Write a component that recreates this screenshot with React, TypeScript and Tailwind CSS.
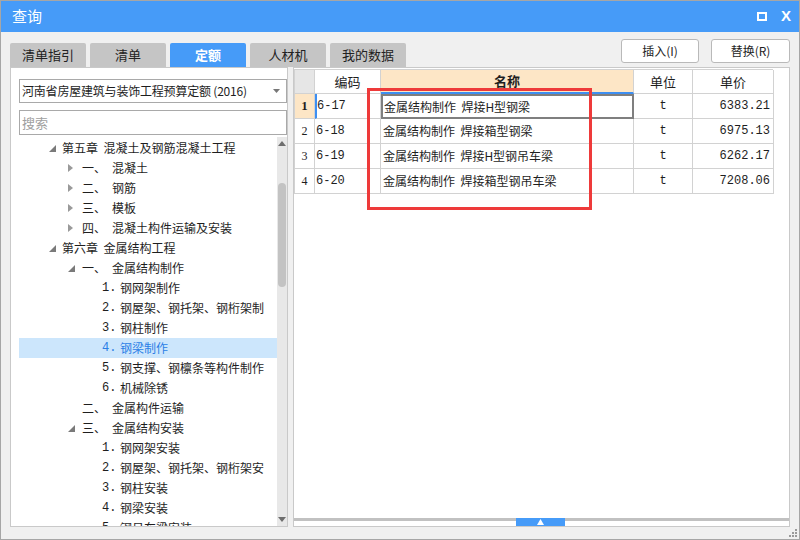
import React from "react";

const cjk = { fontFamily: '"Noto Sans CJK SC", "Noto Sans", sans-serif' };
const mono = { fontFamily: '"Liberation Mono", "Noto Sans CJK SC", monospace' };

type TreeRow = {
  level: 0 | 1 | 2;
  tri?: "open" | "closed";
  num?: string;
  text: string;
  selected?: boolean;
};

const tree: TreeRow[] = [
  { level: 0, tri: "open", text: "第五章  混凝土及钢筋混凝土工程" },
  { level: 1, tri: "closed", num: "一、", text: "混凝土" },
  { level: 1, tri: "closed", num: "二、", text: "钢筋" },
  { level: 1, tri: "closed", num: "三、", text: "模板" },
  { level: 1, tri: "closed", num: "四、", text: "混凝土构件运输及安装" },
  { level: 0, tri: "open", text: "第六章  金属结构工程" },
  { level: 1, tri: "open", num: "一、", text: "金属结构制作" },
  { level: 2, num: "1.", text: "钢网架制作" },
  { level: 2, num: "2.", text: "钢屋架、钢托架、钢桁架制" },
  { level: 2, num: "3.", text: "钢柱制作" },
  { level: 2, num: "4.", text: "钢梁制作", selected: true },
  { level: 2, num: "5.", text: "钢支撑、钢檩条等构件制作" },
  { level: 2, num: "6.", text: "机械除锈" },
  { level: 1, num: "二、", text: "金属构件运输" },
  { level: 1, tri: "open", num: "三、", text: "金属结构安装" },
  { level: 2, num: "1.", text: "钢网架安装" },
  { level: 2, num: "2.", text: "钢屋架、钢托架、钢桁架安" },
  { level: 2, num: "3.", text: "钢柱安装" },
  { level: 2, num: "4.", text: "钢梁安装" },
  { level: 2, num: "5.", text: "钢吊车梁安装" },
];

const rows = [
  { code: "6-17", name: "金属结构制作  焊接H型钢梁", unit: "t", price: "6383.21" },
  { code: "6-18", name: "金属结构制作  焊接箱型钢梁", unit: "t", price: "6975.13" },
  { code: "6-19", name: "金属结构制作  焊接H型钢吊车梁", unit: "t", price: "6262.17" },
  { code: "6-20", name: "金属结构制作  焊接箱型钢吊车梁", unit: "t", price: "7208.06" },
];

const tabs = ["清单指引", "清单", "定额", "人材机", "我的数据"];

function Tri({ kind }: { kind?: "open" | "closed" }) {
  if (kind === "open")
    return (
      <svg width="7" height="7" viewBox="0 0 7 7">
        <polygon points="7,0 7,7 0,7" fill="#7a7a7a" />
      </svg>
    );
  if (kind === "closed")
    return (
      <svg width="5" height="8" viewBox="0 0 5 8">
        <polygon points="0,0 5,4 0,8" fill="#9a9a9a" />
      </svg>
    );
  return null;
}

function TreeItem({ row }: { row: TreeRow }) {
  const color = row.selected ? "text-[#2a7ee6]" : "text-[#1e1e1e]";
  if (row.level === 0) {
    return (
      <div className={`h-[20px] flex items-center pl-[30px] whitespace-pre ${color}`}>
        <span className="w-[13px] flex items-center">
          <Tri kind={row.tri} />
        </span>
        <span>{row.text}</span>
      </div>
    );
  }
  if (row.level === 1) {
    return (
      <div className={`h-[20px] flex items-center pl-[49px] whitespace-pre ${color}`}>
        <span className="w-[14px] flex items-center">
          <Tri kind={row.tri} />
        </span>
        <span className="w-[30px]">{row.num}</span>
        <span>{row.text}</span>
      </div>
    );
  }
  return (
    <div
      className={`h-[20px] flex items-center pl-[83px] whitespace-pre ${color} ${
        row.selected ? "bg-[#cce6fc]" : ""
      }`}
    >
      <span className="w-[18px]" style={mono}>
        {row.num}
      </span>
      <span>{row.text}</span>
    </div>
  );
}

export default function App() {
  return (
    <div
      className="relative w-[800px] h-[540px] bg-[#f0f0f0] border border-[#a6a6a6] flex flex-col text-[12px] text-[#1e1e1e] overflow-hidden"
      style={cjk}
    >
      {/* title bar */}
      <div className="h-[31px] bg-[#469bf8] flex items-center justify-between pl-[11px] pr-[8px] text-white">
        <span className="text-[15px]">查询</span>
        <div className="flex items-center gap-[14px]">
          <div className="w-[10px] h-[9px] border-2 border-white" />
          <span className="text-[15px] font-bold" style={{ fontFamily: '"Liberation Sans", sans-serif' }}>
            X
          </span>
        </div>
      </div>

      {/* tabs + buttons */}
      <div className="h-[35px] flex justify-between px-[9px]">
        <div className="flex items-end gap-[4px]">
          {tabs.map((t) => (
            <div
              key={t}
              className={`w-[76px] h-[24px] flex items-center justify-center rounded-t-[2px] text-[13px] ${
                t === "定额" ? "bg-[#469bf8] text-white font-bold" : "bg-[#c5c5c5] text-[#222]"
              }`}
            >
              {t}
            </div>
          ))}
        </div>
        <div className="flex items-start gap-[12px] pt-[7px]">
          <button className="w-[78px] h-[24px] bg-white border border-[#b9b9b9] rounded-[3px] text-[12px]">
            插入(I)
          </button>
          <button className="w-[79px] h-[24px] bg-white border border-[#b9b9b9] rounded-[3px] text-[12px]">
            替换(R)
          </button>
        </div>
      </div>

      {/* panels */}
      <div className="h-[460px] flex gap-[5px] px-[9px]">
        {/* left */}
        <div className="w-[278px] bg-white border border-[#c9c9c9] pl-[8px] flex flex-col">
          <div className="mt-[11px] h-[24px] border border-[#a9a9a9] flex items-center justify-between pl-[2px] pr-[6px]">
            <span className="whitespace-nowrap tracking-[-0.2px]">河南省房屋建筑与装饰工程预算定额 (2016)</span>
            <svg width="7" height="4" viewBox="0 0 7 4">
              <polygon points="0,0 7,0 3.5,4" fill="#777" />
            </svg>
          </div>
          <div className="mt-[7px] h-[25px] border border-[#a9a9a9] flex items-center pl-[2px] text-[#a0a0a0] text-[13px]">
            搜索
          </div>
          <div className="mt-[2px] flex-1 flex min-h-0">
            <div className="flex-1 overflow-hidden pt-[1px]">
              {tree.map((r, i) => (
                <TreeItem key={i} row={r} />
              ))}
            </div>
            <div className="w-[10px] bg-[#e8e8e8] flex flex-col items-center">
              <svg className="mt-[4px]" width="8" height="5" viewBox="0 0 8 5">
                <polygon points="4,0 8,5 0,5" fill="#6e6e6e" />
              </svg>
              <div className="mt-[37px] w-[8px] h-[104px] bg-[#c3c3c3] rounded-[4px]" />
              <div className="flex-1" />
              <svg className="mb-[4px]" width="8" height="5" viewBox="0 0 8 5">
                <polygon points="0,0 8,0 4,5" fill="#6e6e6e" />
              </svg>
            </div>
          </div>
        </div>

        {/* right */}
        <div className="flex-1 bg-white border border-[#c9c9c9] flex flex-col">
          <div className="flex-1 pt-[1px]">
            <div className="grid grid-cols-[20px_66px_253px_59px_81px] w-[479px] border-t border-l border-[#d2d2d2]">
              <div className="h-[24px] bg-[#e6e6e6] border-r border-b border-[#d2d2d2]" />
              <div className="h-[24px] flex items-center justify-center border-r border-b border-[#d2d2d2] text-[13px]">
                编码
              </div>
              <div className="h-[24px] flex items-center justify-center bg-[#fde6c6] border-r border-b-2 border-b-[#3d8ff2] border-r-[#d2d2d2] text-[13px] font-bold">
                名称
              </div>
              <div className="h-[24px] flex items-center justify-center border-r border-b border-[#d2d2d2] text-[13px]">
                单位
              </div>
              <div className="h-[24px] flex items-center justify-center border-r border-b border-[#d2d2d2] text-[13px]">
                单价
              </div>
              {rows.map((r, i) => (
                <React.Fragment key={r.code}>
                  <div
                    className={`h-[25px] flex items-center justify-center border-r border-b border-[#d2d2d2] ${
                      i === 0 ? "bg-[#fde6c6] font-bold text-[13px]" : "text-[12px]"
                    }`}
                    style={{ fontFamily: '"Liberation Serif", serif' }}
                  >
                    {i + 1}
                  </div>
                  <div
                    className={`h-[25px] flex items-center border-r border-b border-[#d2d2d2] ${
                      i === 0 ? "border-l-2 border-l-[#3d8ff2]" : "pl-[1px]"
                    }`}
                    style={mono}
                  >
                    {r.code}
                  </div>
                  <div
                    className={`h-[25px] flex items-center whitespace-pre ${
                      i === 0
                        ? "border-2 border-[#7f7f7f] pl-[1px]"
                        : "pl-[2px] border-r border-b border-[#d2d2d2]"
                    }`}
                  >
                    {r.name}
                  </div>
                  <div className="h-[25px] flex items-center justify-center border-r border-b border-[#d2d2d2]" style={mono}>
                    {r.unit}
                  </div>
                  <div className="h-[25px] flex items-center justify-end pr-[3px] border-r border-b border-[#d2d2d2]" style={mono}>
                    {r.price}
                  </div>
                </React.Fragment>
              ))}
            </div>
          </div>
          <div className="h-[8px] relative">
            <div className="h-[3px] bg-[#c1c1c1]" />
            <div className="absolute left-[222px] top-0 w-[49px] h-[8px] bg-[#469bf8] flex items-center justify-center">
              <svg width="7" height="6" viewBox="0 0 7 6">
                <polygon points="3.5,0 7,6 0,6" fill="#fff" />
              </svg>
            </div>
          </div>
        </div>
      </div>

      {/* resize grip */}
      <div className="absolute right-[2px] bottom-[2px] grid grid-cols-3 gap-[1px]">
        <span className="w-[2px] h-[2px]" />
        <span className="w-[2px] h-[2px]" />
        <span className="w-[2px] h-[2px] bg-[#9a9a9a]" />
        <span className="w-[2px] h-[2px]" />
        <span className="w-[2px] h-[2px] bg-[#9a9a9a]" />
        <span className="w-[2px] h-[2px] bg-[#9a9a9a]" />
        <span className="w-[2px] h-[2px] bg-[#9a9a9a]" />
        <span className="w-[2px] h-[2px] bg-[#9a9a9a]" />
        <span className="w-[2px] h-[2px] bg-[#9a9a9a]" />
      </div>

      {/* red annotation box */}
      <div className="absolute left-[366px] top-[87px] w-[225px] h-[122px] border-[3px] border-[#ee3a3a]" />
    </div>
  );
}
